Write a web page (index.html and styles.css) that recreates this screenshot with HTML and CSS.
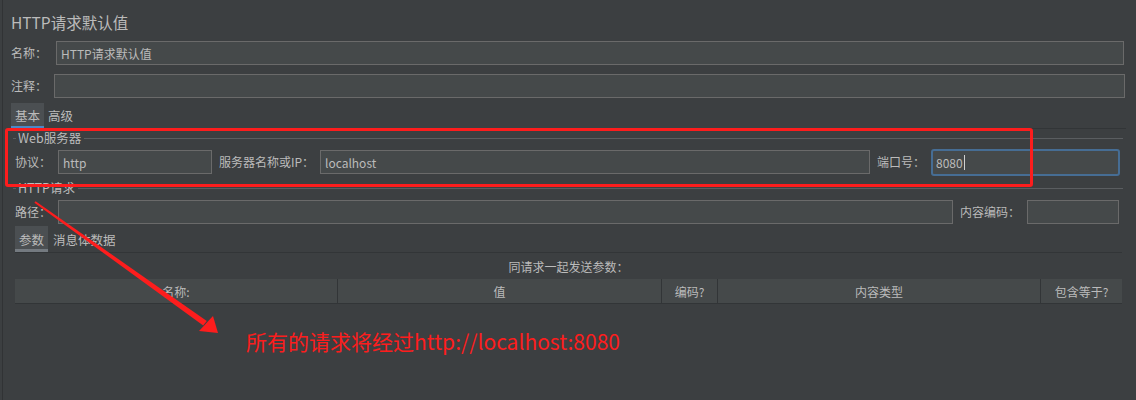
FILE: index.html
```html
<!DOCTYPE html>
<html lang="zh">
<head>
<meta charset="utf-8">
<title>HTTP请求默认值</title>
<link rel="stylesheet" href="styles.css">
</head>
<body>
<div class="app">
  <div class="title">HTTP请求默认值</div>

  <div class="row row-name">
    <span class="lbl lbl-name">名称：</span>
    <div class="input"><span class="val">HTTP请求默认值</span></div>
  </div>

  <div class="row row-comment">
    <span class="lbl lbl-comment">注释：</span>
    <div class="input"></div>
  </div>

  <div class="tabs tabs-main">
    <div class="tab active blue">基本</div>
    <div class="tab">高级</div>
  </div>

  <div class="panel">
    <div class="legend"><span class="dash"></span><span class="legend-text">Web服务器</span><span class="legend-line"></span></div>
    <div class="row row-server">
      <span class="lbl w-proto">协议：</span>
      <div class="input in-proto"><span class="val">http</span></div>
      <span class="lbl w-host">服务器名称或IP：</span>
      <div class="input in-host"><span class="val">localhost</span></div>
      <span class="lbl w-port">端口号：</span>
      <div class="input in-port focus"><span class="val">8080</span><span class="caret"></span></div>
    </div>

    <div class="legend legend-http"><span class="dash"></span><span class="legend-text">HTTP请求</span><span class="legend-line"></span></div>
    <div class="row row-path">
      <span class="lbl w-proto">路径：</span>
      <div class="input in-path"></div>
      <span class="lbl w-enc">内容编码：</span>
      <div class="input in-enc"></div>
    </div>

    <div class="tabs tabs-sub">
      <div class="tab active gray">参数</div>
      <div class="tab">消息体数据</div>
    </div>

    <div class="caption">同请求一起发送参数：</div>

    <div class="thead">
      <div class="th c1">名称:</div>
      <div class="th c2">值</div>
      <div class="th c3">编码?</div>
      <div class="th c4">内容类型</div>
      <div class="th c5">包含等于?</div>
    </div>
  </div>
</div>

<div class="mark-box"></div>
<svg class="mark-arrow" width="1136" height="400" viewBox="0 0 1136 400" xmlns="http://www.w3.org/2000/svg">
  <polygon points="34.4,202.8 35.6,201.2 206.8,321 203.2,325.4" fill="#fd1d1d"/>
  <polygon points="218,333 199,331 213,316" fill="#fd1d1d"/>
</svg>
<div class="mark-text">所有的请求将经过http://localhost:8080</div>
</body>
</html>
```

FILE: styles.css
```css
html, body {
  margin: 0;
  padding: 0;
}
body {
  width: 1136px;
  height: 400px;
  overflow: hidden;
  background: #3c3f41;
  color: #bbbbbb;
  font-family: "Noto Sans CJK SC", "Noto Sans", sans-serif;
  font-size: 12px;
  position: relative;
}
.app {
  margin-left: 2px;
  border-left: 1px solid #313335;
  height: 400px;
  box-sizing: border-box;
}
.title {
  height: 41px;
  box-sizing: border-box;
  padding: 3px 0 0 8px;
  display: flex;
  align-items: center;
  font-size: 15.5px;
  color: #bbbbbb;
}
.row {
  display: flex;
  align-items: center;
  height: 24px;
}
.lbl {
  flex: none;
  white-space: nowrap;
  line-height: 24px;
}
.input {
  box-sizing: border-box;
  height: 24px;
  background: #45494a;
  border: 1px solid #6a6a6a;
  display: flex;
  align-items: center;
  padding-left: 4px;
  color: #bbbbbb;
  white-space: nowrap;
}
.row-name {
  padding-left: 8px;
  margin-right: 12px;
}
.row-name .input { flex: 1; }
.lbl-name { width: 45px; }
.row-comment {
  margin-top: 9px;
  padding-left: 8px;
  margin-right: 11px;
}
.row-comment .input { flex: 1; }
.lbl-comment { width: 43px; }

.tabs {
  display: flex;
  align-items: stretch;
}
.tab {
  display: flex;
  align-items: center;
  padding: 0 4px;
  color: #bbbbbb;
  font-size: 12.5px;
}
.tab.active {
  width: 33px;
  box-sizing: border-box;
  justify-content: center;
  padding: 0;
  background: #4b4f52;
}
.tab.active.blue { box-shadow: inset 0 -2px 0 #4a88c7; }
.tab.active.gray { box-shadow: inset 0 -3px 0 #747a80; }
.tabs-main {
  margin-top: 5px;
  margin-left: 8px;
  height: 25px;
}
.tabs-main .tab + .tab { padding-left: 4px; }

.panel {
  margin: 0 10px 0 8px;
  border-top: 1px solid #323537;
}
.legend {
  display: flex;
  align-items: center;
  height: 18px;
  margin-right: 3px;
}
.dash {
  width: 3px;
  height: 1px;
  margin-left: 2px;
  background: #5a5d60;
}
.legend-text {
  padding: 0 3px 0 2px;
  color: #bbbbbb;
  font-size: 12.5px;
  line-height: 18px;
}
.legend-line {
  flex: 1;
  height: 1px;
  background: #5a5d60;
}
.row-server {
  margin-top: 3px;
  padding-left: 4px;
}
.w-proto { width: 43px; }
.in-proto { width: 154px; }
.w-host { width: 101px; margin-left: 7px; }
.in-host { width: 550px; }
.w-port { width: 54px; margin-left: 7px; }
.in-port { width: 189px; }
.input.focus {
  height: 27px;
  border: 2px solid #466d94;
  border-radius: 3px;
  padding-left: 3px;
  margin-top: -1px;
  margin-bottom: -2px;
}
.caret {
  width: 1px;
  height: 15px;
  background: #d0d0d0;
  margin-left: 1px;
}
.legend-http { margin-top: 5px; }
.row-path {
  margin-top: 3px;
  padding-left: 4px;
  margin-right: 7px;
}
.in-path { flex: 1; }
.w-enc { width: 67px; margin-left: 7px; }
.in-enc { width: 92px; }

.tabs-sub {
  margin: 2px 4px 0 4px;
  height: 26px;
  border-bottom: 1px solid #323537;
}
.tabs-sub .tab + .tab { padding-left: 5px; }

.caption {
  height: 26px;
  margin: 0 4px;
  display: flex;
  align-items: center;
  justify-content: center;
}
.thead {
  margin: 0 4px;
  height: 25px;
  display: flex;
  background: #45494a;
  border-bottom: 1px solid #323537;
  box-sizing: border-box;
}
.th {
  display: flex;
  align-items: center;
  justify-content: center;
  box-sizing: border-box;
  border-right: 1px solid #323537;
}
.th.c5 { border-right: none; }
.c1 { width: 323px; }
.c2 { width: 324px; }
.c3 { width: 56px; }
.c4 { width: 323px; }
.c5 { flex: 1; }

.mark-box {
  position: absolute;
  left: 5px;
  top: 128px;
  width: 1028px;
  height: 59px;
  box-sizing: border-box;
  border: 3px solid #fd1d1d;
  border-radius: 3px;
  pointer-events: none;
}
.mark-arrow {
  position: absolute;
  left: 0;
  top: 0;
  pointer-events: none;
}
.mark-text {
  position: absolute;
  left: 246px;
  top: 328px;
  line-height: 27px;
  font-size: 21px;
  color: #fd1d1d;
  white-space: nowrap;
  font-family: "Noto Sans CJK SC", "Noto Sans", sans-serif;
}
```
